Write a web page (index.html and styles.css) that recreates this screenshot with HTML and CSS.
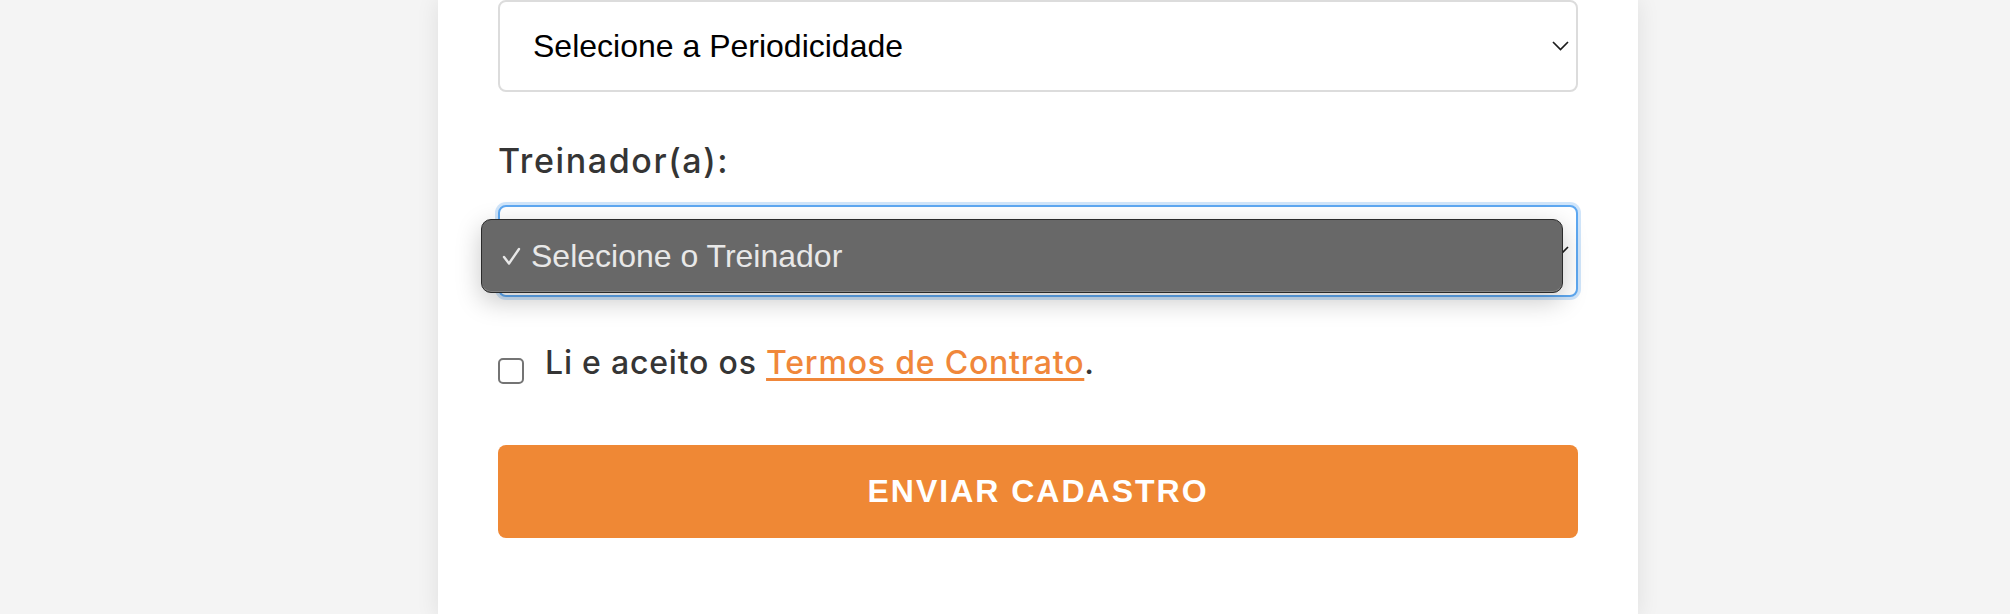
FILE: index.html
```html
<!DOCTYPE html>
<html lang="pt-BR">
<head>
<meta charset="utf-8">
<title>Cadastro</title>
<link rel="stylesheet" href="styles.css">
</head>
<body>
<div class="page">
  <main class="card">
    <div class="select">
      <span class="select-text">Selecione a Periodicidade</span>
      <svg class="chev" width="17" height="10" viewBox="0 0 17 10"><polyline points="1,1 8.5,8.5 16,1" fill="none" stroke="#1c1c1c" stroke-width="1.7"/></svg>
    </div>

    <label class="label">Treinador(a):</label>

    <div class="select focused">
      <span class="select-text"></span>
      <svg class="chev" width="17" height="10" viewBox="0 0 17 10"><polyline points="1,1 8.5,8.5 16,1" fill="none" stroke="#1c1c1c" stroke-width="1.7"/></svg>
      <div class="popup">
        <svg class="check" width="19" height="19" viewBox="0 0 19 19"><polyline points="2,10 7,16.5 17,2" fill="none" stroke="#e8e8e8" stroke-width="2.4" stroke-linecap="round" stroke-linejoin="round"/></svg>
        <span class="popup-text">Selecione o Treinador</span>
      </div>
    </div>

    <div class="terms">
      <span class="checkbox"></span>
      <span class="terms-text">Li e aceito os <a class="terms-link" href="#">Termos de Contrato</a>.</span>
    </div>

    <button class="submit" type="button">ENVIAR CADASTRO</button>
  </main>
</div>
</body>
</html>
```

FILE: styles.css
```css
html, body {
  margin: 0;
  padding: 0;
}
body {
  background: #f4f4f4;
  height: 614px;
  overflow: hidden;
}
.page {
  padding-left: 438px;
}
.card {
  width: 1200px;
  min-height: 614px;
  box-sizing: border-box;
  padding: 0 60px 80px;
  background: #ffffff;
  box-shadow: 0 0 22px rgba(0, 0, 0, 0.09);
}
.select {
  position: relative;
  height: 92px;
  box-sizing: border-box;
  border: 2px solid #dcdcdc;
  border-radius: 8px;
  display: flex;
  align-items: center;
  padding: 0 7px 0 33px;
  font-family: "Liberation Sans", Arial, sans-serif;
  font-size: 32px;
  color: #000;
  background: #fff;
}
.select-text {
  flex: 1;
}
.chev {
  flex-shrink: 0;
  display: block;
}
.select.focused {
  border-color: #5ea8f1;
  box-shadow: 0 0 0 3px rgba(110, 175, 240, 0.32);
}
.label {
  display: block;
  margin: 48px 0 24px;
  font-family: Inter, "Open Sans", sans-serif;
  font-size: 34px;
  font-weight: 500;
  line-height: 41px;
  letter-spacing: 1.6px;
  color: #353535;
}
.popup {
  position: absolute;
  left: -19px;
  top: 12px;
  width: 1082px;
  height: 74px;
  box-sizing: border-box;
  border: 1px solid #2b2b2b;
  border-radius: 10px;
  background: #686868;
  box-shadow: inset 0 -1px 0 rgba(255, 255, 255, 0.18), 0 8px 26px rgba(0, 0, 0, 0.22);
  display: flex;
  align-items: center;
  padding-left: 20px;
  gap: 10px;
}
.check {
  display: block;
  flex-shrink: 0;
}
.popup-text {
  font-family: "Liberation Sans", Arial, sans-serif;
  font-size: 32px;
  color: #e8e8e8;
}
.terms {
  display: flex;
  align-items: flex-start;
  margin-top: 46px;
  font-family: Inter, "Open Sans", sans-serif;
  font-size: 32px;
  font-weight: 500;
  line-height: 39px;
  letter-spacing: 0.8px;
  color: #353535;
}
.checkbox {
  flex-shrink: 0;
  width: 26px;
  height: 26px;
  box-sizing: border-box;
  margin-top: 15px;
  margin-right: 21px;
  border: 2px solid #747474;
  border-radius: 5px;
  background: #fff;
}
.terms-link {
  color: #f0873a;
  text-decoration: underline;
  text-decoration-thickness: 3px;
  text-underline-offset: 4px;
}
.submit {
  display: block;
  width: 100%;
  height: 93px;
  margin-top: 61px;
  border: none;
  border-radius: 8px;
  background: #ef8835;
  color: #fff;
  font-family: "Liberation Sans", Arial, sans-serif;
  font-weight: bold;
  font-size: 32px;
  letter-spacing: 2px;
  cursor: pointer;
}
```
